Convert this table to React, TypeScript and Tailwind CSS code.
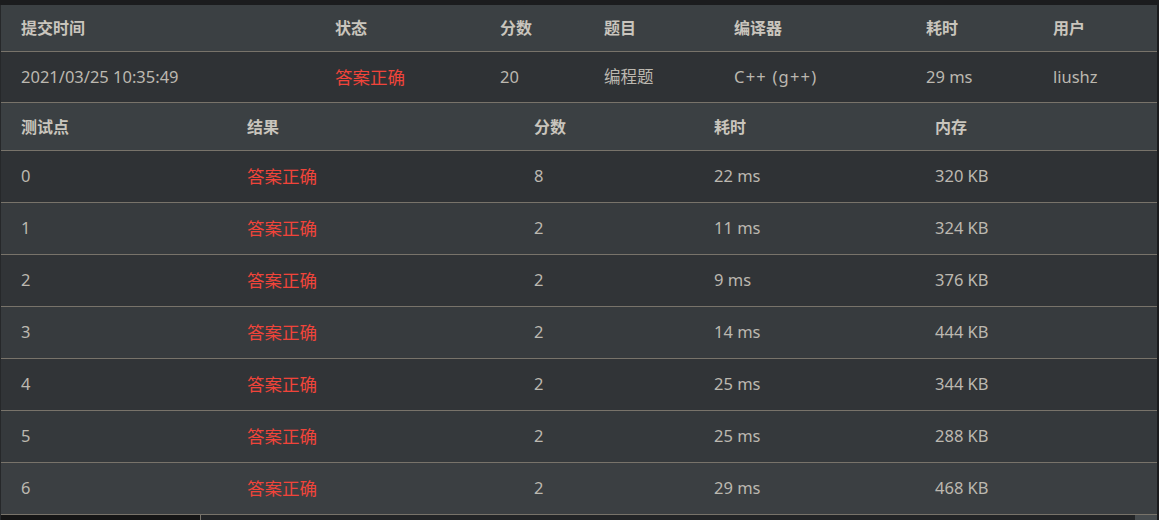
import React from "react";

const top = [
  { label: "提交时间", w: "w-[314px]" },
  { label: "状态", w: "w-[165px]" },
  { label: "分数", w: "w-[104px]" },
  { label: "题目", w: "w-[130px]" },
  { label: "编译器", w: "w-[192px]" },
  { label: "耗时", w: "w-[127px]" },
  { label: "用户", w: "flex-1" },
];

const sub = [
  { label: "测试点", w: "w-[226px]" },
  { label: "结果", w: "w-[287px]" },
  { label: "分数", w: "w-[180px]" },
  { label: "耗时", w: "w-[221px]" },
  { label: "内存", w: "flex-1" },
];

const cases = [
  ["0", "8", "22 ms", "320 KB"],
  ["1", "2", "11 ms", "324 KB"],
  ["2", "2", "9 ms", "376 KB"],
  ["3", "2", "14 ms", "444 KB"],
  ["4", "2", "25 ms", "344 KB"],
  ["5", "2", "25 ms", "288 KB"],
  ["6", "2", "29 ms", "468 KB"],
];

const rowBg = ["bg-[#2f3235]", "bg-[#373b3e]", "bg-[#313437]", "bg-[#373b3e]", "bg-[#313437]", "bg-[#35393c]", "bg-[#3b3f42]"];

export default function App() {
  const font = { fontFamily: '"Noto Sans", "Noto Sans CJK SC", sans-serif' };
  return (
    <div className="w-[1159px] h-[520px] bg-[#1b1c1e] pt-[5px] overflow-hidden text-[16.5px]" style={font}>
      <div className="w-[1157px] border-l border-[#26282a]">
        {/* top header */}
        <div className="flex items-center h-[47px] bg-[#3b4043] border-b border-[#78736a] text-[#c9c5bd] font-bold text-[16px]">
          {top.map((c) => (
            <div key={c.label} className={`${c.w} pl-[20px]`}>{c.label}</div>
          ))}
        </div>
        <div className="flex items-center h-[51px] bg-[#2f3235] border-b border-[#78736a] text-[#bcb8b0]">
          <div className="w-[314px] pl-[20px]">2021/03/25 10:35:49</div>
          <div className="w-[165px] pl-[20px] text-[#f0443a] text-[17.5px]">答案正确</div>
          <div className="w-[104px] pl-[20px]">20</div>
          <div className="w-[130px] pl-[20px]">编程题</div>
          <div className="w-[192px] pl-[20px] tracking-[1.2px]">C++ (g++)</div>
          <div className="w-[127px] pl-[20px]">29 ms</div>
          <div className="flex-1 pl-[20px]">liushz</div>
        </div>
        {/* sub header */}
        <div className="flex items-center h-[48px] bg-[#3b4043] border-b border-[#78736a] text-[#c9c5bd] font-bold text-[16px]">
          {sub.map((c) => (
            <div key={c.label} className={`${c.w} pl-[20px]`}>{c.label}</div>
          ))}
        </div>
        {cases.map((r, i) => (
          <div key={r[0]} className={`flex items-center h-[52px] ${rowBg[i]} border-b border-[#78736a] text-[#bcb8b0]`}>
            <div className="w-[226px] pl-[20px]">{r[0]}</div>
            <div className="w-[287px] pl-[20px] text-[#f0443a] text-[17.5px]">答案正确</div>
            <div className="w-[180px] pl-[20px]">{r[1]}</div>
            <div className="w-[221px] pl-[20px]">{r[2]}</div>
            <div className="flex-1 pl-[20px]">{r[3]}</div>
          </div>
        ))}
        <div className="flex h-[10px]">
          <div className="w-[199px] bg-[#151515]" />
          <div className="flex-1 bg-[#232527] border-l border-[#78736a]" />
          <div className="w-[22px] bg-[#464b4e]" />
        </div>
      </div>
    </div>
  );
}
